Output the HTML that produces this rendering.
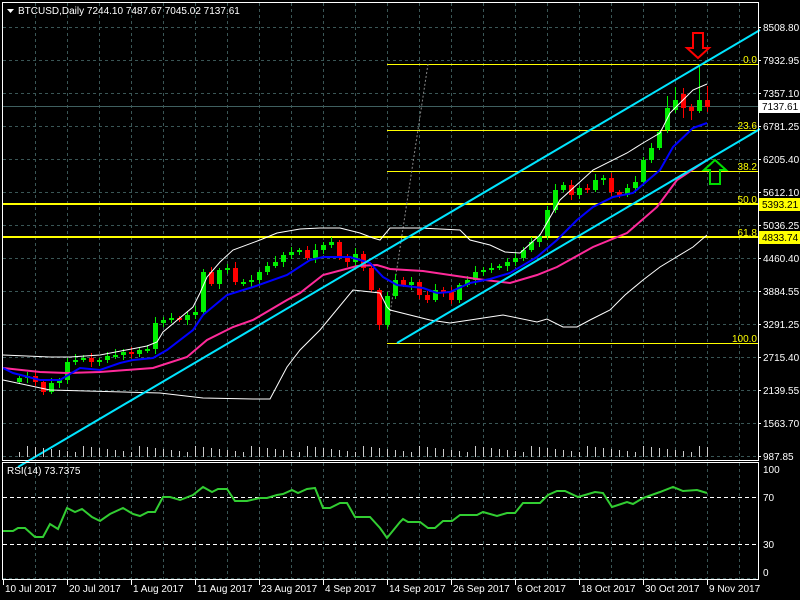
<!DOCTYPE html>
<html><head><meta charset="utf-8"><style>
html,body{margin:0;padding:0;background:#000;width:800px;height:600px;overflow:hidden}
svg{display:block}
text{font-family:"Liberation Sans",sans-serif;font-size:10px}
</style></head><body>
<svg id="s" width="800" height="600" xmlns="http://www.w3.org/2000/svg">
<rect width="800" height="600" fill="#000"/>
<g id="grid" stroke="#3a5656" stroke-width="1" stroke-dasharray="3,3"></g>
<g stroke="#ffff00" stroke-width="1">
<line x1="387" y1="64.5" x2="758" y2="64.5"/>
<line x1="387" y1="130.5" x2="758" y2="130.5"/>
<line x1="387" y1="171.5" x2="758" y2="171.5"/>
<line x1="387" y1="343.5" x2="758" y2="343.5"/>
</g>
<g stroke="#ffff00" stroke-width="2">
<line x1="2" y1="204" x2="758" y2="204"/>
<line x1="2" y1="237" x2="758" y2="237"/>
</g>
<line x1="2" y1="106.5" x2="758" y2="106.5" stroke="#3f5f5f"/>
<line x1="388" y1="327" x2="428" y2="64" stroke="#888" stroke-dasharray="2,2"/>
<g id="candles"></g>
<g fill="none" stroke-width="1" stroke="#fff">
<polyline points="3,355 50,357 70,357 100,355 147,346 157,342 163,332 193,307 200,293 207,277 220,262 233,250 260,240 277,233 300,229 320,228 340,228 360,233 373,238 380,240 390,228 420,228 460,230 470,240 490,245 505,252 520,253 540,235 560,200 593,170 627,153 643,143 660,133 670,113 680,103 693,90 707,84"/>
<polyline points="3,380 50,390 160,393 203,398 253,399 270,399 287,367 300,350 320,330 353,290 380,293 387,307 390,310 430,320 450,323 470,320 503,315 537,322 547,319 563,327 577,327 590,320 610,310 625,295 643,280 660,267 693,247 707,235"/>
</g>
<polyline fill="none" stroke="#ff2a9a" stroke-width="2" points="3,368 40,372 67,373 100,372 153,368 187,357 207,340 233,327 253,320 287,300 300,293 323,275 357,266 377,265 390,269 423,271 450,275 477,279 510,283 537,275 557,267 593,247 627,233 657,207 677,180 707,160"/>
<polyline fill="none" stroke="#0000ff" stroke-width="2" points="3,368 13,373 40,380 60,380 80,368 100,370 120,363 133,360 153,358 167,350 193,330 203,315 227,295 253,287 287,275 310,260 323,257 350,257 370,263 383,277 397,285 423,288 437,293 450,292 470,283 490,279 510,273 537,257 557,240 577,220 593,207 613,197 633,193 660,170 673,147 693,128 707,123"/>
<g stroke="#00e5ff" stroke-width="2">
<line x1="18" y1="467" x2="760" y2="30"/>
<line x1="397" y1="343" x2="760" y2="129"/>
</g>
<path d="M693,33 H703 V48 H709 L698,58 L687,48 H693 Z" fill="none" stroke="#ff0000" stroke-width="2"/>
<path d="M710,184 H720 V170 H726 L715,160 L704,170 H710 Z" fill="none" stroke="#00dd00" stroke-width="2"/>
<g fill="#ffff00" text-anchor="end">
<text x="757" y="63">0.0</text><text x="757" y="129">23.6</text><text x="757" y="170">38.2</text>
<text x="757" y="203">50.0</text><text x="757" y="236">61.8</text><text x="757" y="342">100.0</text>
</g>
<g id="vol" stroke="#ccc"></g>
<g stroke="#fff" fill="none">
<rect x="2.5" y="2.5" width="756" height="458"/>
<rect x="2.5" y="462.5" width="756" height="117"/>
</g>
<g stroke="#fff" stroke-dasharray="4,3">
<line x1="3" y1="497.5" x2="758" y2="497.5"/><line x1="3" y1="544.5" x2="758" y2="544.5"/>
</g>
<line x1="3" y1="578.5" x2="758" y2="578.5" stroke="#3a5656" stroke-dasharray="3,3"/>
<polyline fill="none" stroke="#32cd32" stroke-width="2" points="3,531 13,531 18,528 25,528 35,537 43,537 50,524 58,529 67,508 75,512 82,509 92,517 100,521 110,514 123,508 133,514 140,516 148,512 155,512 163,497 170,497 180,500 193,495 203,487 212,492 218,489 227,489 235,501 247,501 260,498 267,498 277,495 283,494 292,490 298,493 307,489 315,488 323,508 330,508 340,503 347,503 355,517 370,517 380,528 387,538 400,522 403,519 408,522 420,522 428,528 435,528 443,521 452,521 460,515 477,515 483,512 497,516 507,513 515,513 523,503 540,503 548,495 557,491 565,491 578,497 585,495 595,492 603,493 612,507 627,502 633,504 643,498 660,492 673,487 683,491 697,490 707,493"/>
<g fill="#fff">
<path d="M7,9 h7 l-3.5,4 z"/>
<text x="18" y="14">BTCUSD,Daily  7244.10 7487.67 7045.02 7137.61</text>
<text x="7" y="474">RSI(14) 73.7375</text>
</g>
<g id="axis" fill="#fff"></g>
<rect x="759" y="100" width="41" height="13" fill="#fff"/>
<text x="762" y="110" fill="#000">7137.61</text>
<rect x="759" y="198" width="41" height="13" fill="#ffff00"/>
<text x="762" y="208" fill="#000">5393.21</text>
<rect x="759" y="231" width="41" height="13" fill="#ffff00"/>
<text x="762" y="241" fill="#000">4833.74</text>
</svg>
<script>
var NS="http://www.w3.org/2000/svg";
function el(p,t,a,txt){var e=document.createElementNS(NS,t);for(var k in a)e.setAttribute(k,a[k]);if(txt!=null)e.textContent=txt;p.appendChild(e);return e;}
var g=document.getElementById('grid');
for(var x=35;x<758;x+=32){el(g,'line',{x1:x+.5,y1:3,x2:x+.5,y2:460});el(g,'line',{x1:x+.5,y1:463,x2:x+.5,y2:579});}
var hs=[27,60,93,126,159,192,225,258,291,324,357,390,423,456];
hs.forEach(function(y){el(g,'line',{x1:3,y1:y+.5,x2:758,y2:y+.5});});
var ax=document.getElementById('axis');
var pl=["8508.80","7932.95","7357.10","6781.25","6205.40","5612.10","5036.25","4460.40","3884.55","3291.25","2715.40","2139.55","1563.70","987.85"];
hs.forEach(function(y,i){el(ax,'text',{x:763,y:y+4},pl[i]);el(ax,'line',{x1:758,y1:y+.5,x2:761,y2:y+.5,stroke:'#fff'});});
[["100",469],["70",497],["30",544],["0",572]].forEach(function(r){el(ax,'text',{x:763,y:r[1]+4},r[0]);});
var dl=["10 Jul 2017","20 Jul 2017","1 Aug 2017","11 Aug 2017","23 Aug 2017","4 Sep 2017","14 Sep 2017","26 Sep 2017","6 Oct 2017","18 Oct 2017","30 Oct 2017","9 Nov 2017"];
dl.forEach(function(d,i){var x=3+64*i;el(ax,'text',{x:x+2,y:592},d);el(ax,'line',{x1:x+.5,y1:580,x2:x+.5,y2:585,stroke:'#fff'});});
var orig=[372,375,378,376,382,392,383,380,362,360,358,362,360,356,355,352,354,350,349,323,320,318,320,315,312,272,284,270,268,282,282,280,272,266,262,255,252,250,258,250,245,242,258,262,254,268,290,325,296,280,285,282,295,300,290,292,300,285,280,272,270,268,266,262,258,250,242,236,210,190,185,195,188,190,180,178,192,195,188,182,160,148,132];
var base=orig.slice(2);
var bars=[];var n=base.length;
for(var i=0;i<n;i++){var c=base[i],o=i?base[i-1]:c+4;if(Math.abs(o-c)<2)o=c+2;
var w=2+((i*7)%5),w2=2+((i*11)%4);bars.push([659-8*(n-1-i),o,Math.min(o,c)-w,Math.max(o,c)+w2,c]);}
bars.push([667,130,96,133,108],[675,110,87,113,100],[683,94,88,118,108],[691,107,104,120,111],[699,111,64,113,100],[707,100,86,112,107]);
var cg=document.getElementById('candles'),vg=document.getElementById('vol');
bars.forEach(function(b,i){var x=b[0],o=b[1],h=b[2],l=b[3],c=b[4];var col=c<o?'#00ee00':'#ff0000';
el(cg,'line',{x1:x+.5,y1:h,x2:x+.5,y2:l,stroke:col});
var t=Math.min(o,c),bh=Math.max(Math.abs(o-c),1);el(cg,'rect',{x:x-2,y:t,width:5,height:bh,fill:col});
var vh=5+((i*13)%7);el(vg,'line',{x1:x+.5,y1:457-vh,x2:x+.5,y2:457});});
</script>
</body></html>
